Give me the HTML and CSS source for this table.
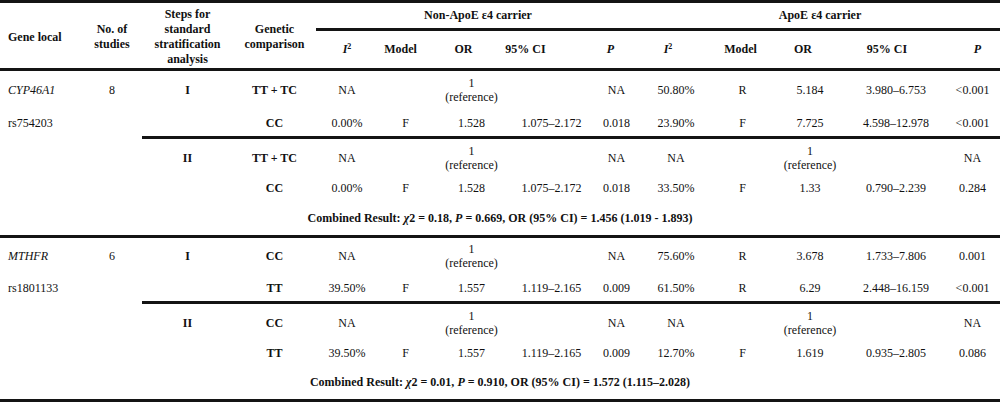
FILE: index.html
```html
<!DOCTYPE html>
<html lang="en">
<head>
<meta charset="utf-8">
<title>Stratification analysis</title>
<link rel="stylesheet" href="styles.css">
</head>
<body>
<div class="table">
  <div class="rule full"></div>

  <div class="th gene hspan">Gene local</div>
  <div class="th hspan">No. of<br>studies</div>
  <div class="th hspan">Steps for<br>standard<br>stratification<br>analysis</div>
  <div class="th hspan">Genetic<br>comparison</div>
  <div class="th group">Non-ApoE ε4 carrier</div>
  <div class="th group">ApoE ε4 carrier</div>

  <div class="rule groups"></div>

  <div class="th"><span><i>I</i><sup>2</sup></span></div>
  <div class="th h-model1">Model</div>
  <div class="th h-or1">OR</div>
  <div class="th h-ci1">95% CI</div>
  <div class="th h-p1"><i>P</i></div>
  <div class="th h-i2"><span><i>I</i><sup>2</sup></span></div>
  <div class="th h-model2">Model</div>
  <div class="th h-or2">OR</div>
  <div class="th h-ci2">95% CI</div>
  <div class="th h-p2"><i>P</i></div>

  <div class="rule full"></div>

  <!-- CYP46A1 -->
  <div class="td gene"><i>CYP46A1</i></div>
  <div class="td">8</div>
  <div class="td b">I</div>
  <div class="td b">TT + TC</div>
  <div class="td">NA</div>
  <div class="td"></div>
  <div class="td">1<br>(reference)</div>
  <div class="td"></div>
  <div class="td">NA</div>
  <div class="td">50.80%</div>
  <div class="td">R</div>
  <div class="td">5.184</div>
  <div class="td">3.980–6.753</div>
  <div class="td">&lt;0.001</div>

  <div class="td gene">rs754203</div>
  <div class="td"></div>
  <div class="td"></div>
  <div class="td b">CC</div>
  <div class="td">0.00%</div>
  <div class="td">F</div>
  <div class="td">1.528</div>
  <div class="td">1.075–2.172</div>
  <div class="td">0.018</div>
  <div class="td">23.90%</div>
  <div class="td">F</div>
  <div class="td">7.725</div>
  <div class="td">4.598–12.978</div>
  <div class="td">&lt;0.001</div>

  <div class="rule part"></div>

  <div class="td gene"></div>
  <div class="td"></div>
  <div class="td b">II</div>
  <div class="td b">TT + TC</div>
  <div class="td">NA</div>
  <div class="td"></div>
  <div class="td">1<br>(reference)</div>
  <div class="td"></div>
  <div class="td">NA</div>
  <div class="td">NA</div>
  <div class="td"></div>
  <div class="td">1<br>(reference)</div>
  <div class="td"></div>
  <div class="td">NA</div>

  <div class="td gene"></div>
  <div class="td"></div>
  <div class="td"></div>
  <div class="td b">CC</div>
  <div class="td">0.00%</div>
  <div class="td">F</div>
  <div class="td">1.528</div>
  <div class="td">1.075–2.172</div>
  <div class="td">0.018</div>
  <div class="td">33.50%</div>
  <div class="td">F</div>
  <div class="td">1.33</div>
  <div class="td">0.790–2.239</div>
  <div class="td">0.284</div>

  <div class="td combined"><span>Combined Result: <i>χ</i>2 = 0.18, <i>P</i> = 0.669, OR (95% CI) = 1.456 (1.019 - 1.893)</span></div>

  <div class="rule full"></div>

  <!-- MTHFR -->
  <div class="td gene"><i>MTHFR</i></div>
  <div class="td">6</div>
  <div class="td b">I</div>
  <div class="td b">CC</div>
  <div class="td">NA</div>
  <div class="td"></div>
  <div class="td">1<br>(reference)</div>
  <div class="td"></div>
  <div class="td">NA</div>
  <div class="td">75.60%</div>
  <div class="td">R</div>
  <div class="td">3.678</div>
  <div class="td">1.733–7.806</div>
  <div class="td">0.001</div>

  <div class="td gene">rs1801133</div>
  <div class="td"></div>
  <div class="td"></div>
  <div class="td b">TT</div>
  <div class="td">39.50%</div>
  <div class="td">F</div>
  <div class="td">1.557</div>
  <div class="td">1.119–2.165</div>
  <div class="td">0.009</div>
  <div class="td">61.50%</div>
  <div class="td">R</div>
  <div class="td">6.29</div>
  <div class="td">2.448–16.159</div>
  <div class="td">&lt;0.001</div>

  <div class="rule part"></div>

  <div class="td gene"></div>
  <div class="td"></div>
  <div class="td b">II</div>
  <div class="td b">CC</div>
  <div class="td">NA</div>
  <div class="td"></div>
  <div class="td">1<br>(reference)</div>
  <div class="td"></div>
  <div class="td">NA</div>
  <div class="td">NA</div>
  <div class="td"></div>
  <div class="td">1<br>(reference)</div>
  <div class="td"></div>
  <div class="td">NA</div>

  <div class="td gene"></div>
  <div class="td"></div>
  <div class="td"></div>
  <div class="td b">TT</div>
  <div class="td">39.50%</div>
  <div class="td">F</div>
  <div class="td">1.557</div>
  <div class="td">1.119–2.165</div>
  <div class="td">0.009</div>
  <div class="td">12.70%</div>
  <div class="td">F</div>
  <div class="td">1.619</div>
  <div class="td">0.935–2.805</div>
  <div class="td">0.086</div>

  <div class="td combined"><span>Combined Result: <i>χ</i>2 = 0.01, <i>P</i> = 0.910, OR (95% CI) = 1.572 (1.115–2.028)</span></div>

  <div class="rule full"></div>
</div>
</body>
</html>
```

FILE: styles.css
```css
html, body {
  margin: 0;
  padding: 0;
  background: #ffffff;
}

body {
  font-family: "Liberation Serif", "Times New Roman", serif;
  font-size: 12px;
  color: #111111;
}

.table {
  width: 1000px;
  display: grid;
  grid-template-columns: 82px 60px 91px 83px 62px 55px 77px 83px 47px 72px 61px 74px 98px 55px;
  grid-template-rows:
    3px 25px 3px 37px 3px
    38px 27px 3px 37px 24px 35px 3px
    36px 27px 3px 37px 24px 34px 3px;
}

.rule {
  background: #141414;
}
.rule.full { grid-column: 1 / -1; }
.rule.groups { grid-column: 5 / -1; }
.rule.part { grid-column: 3 / -1; }

.th, .td {
  display: flex;
  align-items: center;
  justify-content: center;
  text-align: center;
  white-space: nowrap;
}

.th {
  font-weight: bold;
  line-height: 15px;
}

.td {
  line-height: 14px;
}

.hspan {
  grid-row: span 3;
  padding-top: 3px;
}

.group {
  grid-column: span 5;
}

.gene {
  justify-content: flex-start;
  text-align: left;
  padding-left: 8px;
}

.b { font-weight: bold; }

.combined {
  grid-column: 1 / -1;
  font-weight: bold;
}

sup {
  font-size: 8px;
  line-height: 0;
  vertical-align: 4px;
}

/* header labels sit slightly off the data column centres */
.h-model1 { padding-right: 10px; }
.h-or1 { padding-right: 16px; }
.h-ci1 { padding-right: 52px; }
.h-p1 { padding-right: 12px; }
.h-i2 { padding-right: 16px; }
.h-model2 { padding-right: 4px; }
.h-or2 { padding-right: 14px; }
.h-ci2 { padding-right: 18px; }
.h-p2 { padding-left: 10px; }
```
